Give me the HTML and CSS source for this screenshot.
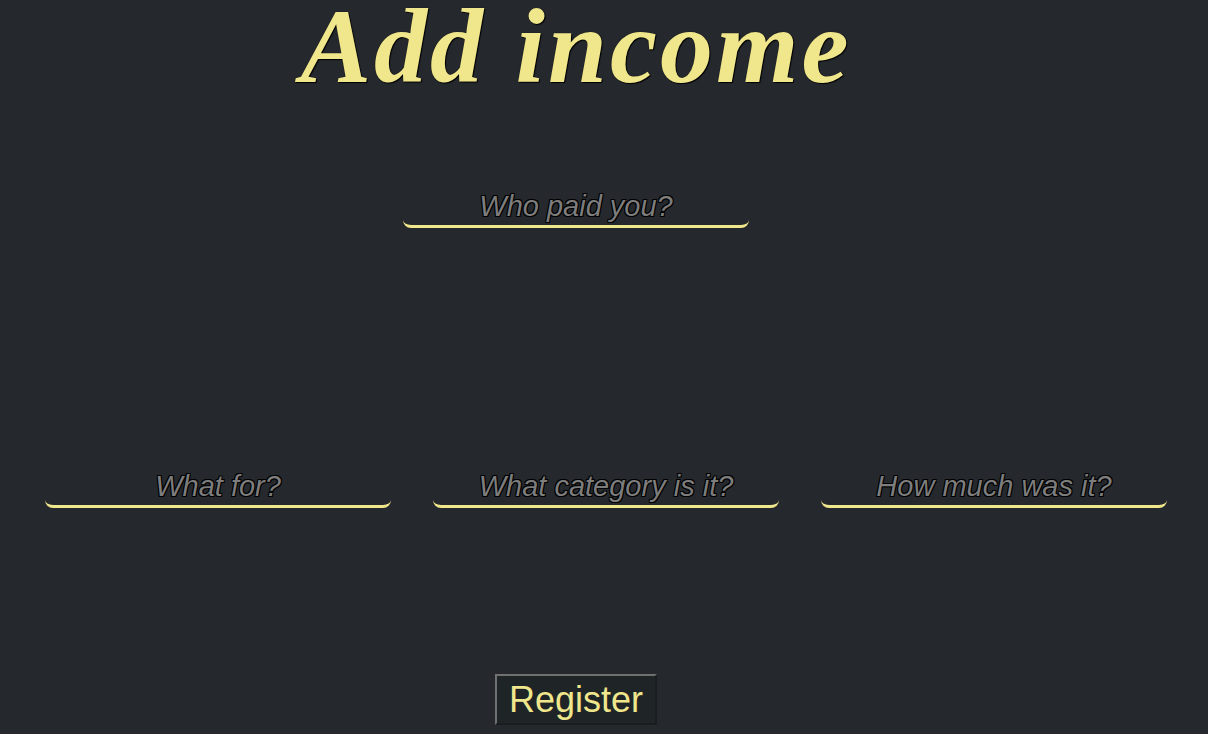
FILE: index.html
```html
<!DOCTYPE html>
<html>
<head>
<meta charset="utf-8">
<link rel="stylesheet" href="styles.css">
</head>
<body>
<div class="page">
  <div class="top">
    <h1 class="title">Add income</h1>
    <input class="field" type="text" placeholder="Who paid you?">
  </div>
  <div class="row">
    <input class="field" type="text" placeholder="What for?">
    <input class="field" type="text" placeholder="What category is it?">
    <input class="field" type="text" placeholder="How much was it?">
  </div>
  <div class="actions">
    <button class="register">Register</button>
  </div>
</div>
</body>
</html>
```
FILE: styles.css
```css
html, body {
  margin: 0;
  padding: 0;
  background: #25292d;
  height: 100%;
  overflow: hidden;
}
.page {
  display: flex;
  flex-direction: column;
  font-family: "Liberation Sans", Arial, sans-serif;
}
.top {
  width: 1152px;
  display: flex;
  flex-direction: column;
  align-items: center;
}
.title {
  margin: 0 0 13px;
  height: 97px;
  font-family: "Liberation Serif", "Times New Roman", serif;
  font-style: italic;
  font-weight: bold;
  font-size: 106px;
  letter-spacing: 3px;
  line-height: 94px;
  color: #f0e68c;
  text-shadow: 1px 1px 1px #000, 0 0 1px #000;
  white-space: nowrap;
}
.field {
  box-sizing: border-box;
  width: 346px;
  height: 40px;
  background: transparent;
  border: none;
  border-bottom: 3px solid #f0e68c;
  border-radius: 0 0 8px 8px;
  font-family: "Liberation Sans", Arial, sans-serif;
  font-style: italic;
  font-size: 29px;
  text-align: center;
  color: #f0e68c;
  outline: none;
  padding: 0;
}
.field::placeholder {
  color: #7d7d7d;
  opacity: 1;
  text-shadow: 1px 1px 0 #000, -1px -1px 0 #000, 1px -1px 0 #000, -1px 1px 0 #000;
}
.top .field {
  margin-top: 78px;
}
.row {
  margin-top: 240px;
  padding-left: 4px;
  display: flex;
  justify-content: center;
  gap: 42px;
}
.actions {
  width: 1152px;
  display: flex;
  justify-content: center;
  margin-top: 166px;
}
.register {
  width: 162px;
  height: 51px;
  background: #1f2427;
  color: #f0e68c;
  font-family: "Liberation Sans", Arial, sans-serif;
  font-size: 36px;
  line-height: 1;
  border: 2px solid;
  border-color: #707070 #1a1d20 #1a1d20 #707070;
  padding: 0;
}
```
